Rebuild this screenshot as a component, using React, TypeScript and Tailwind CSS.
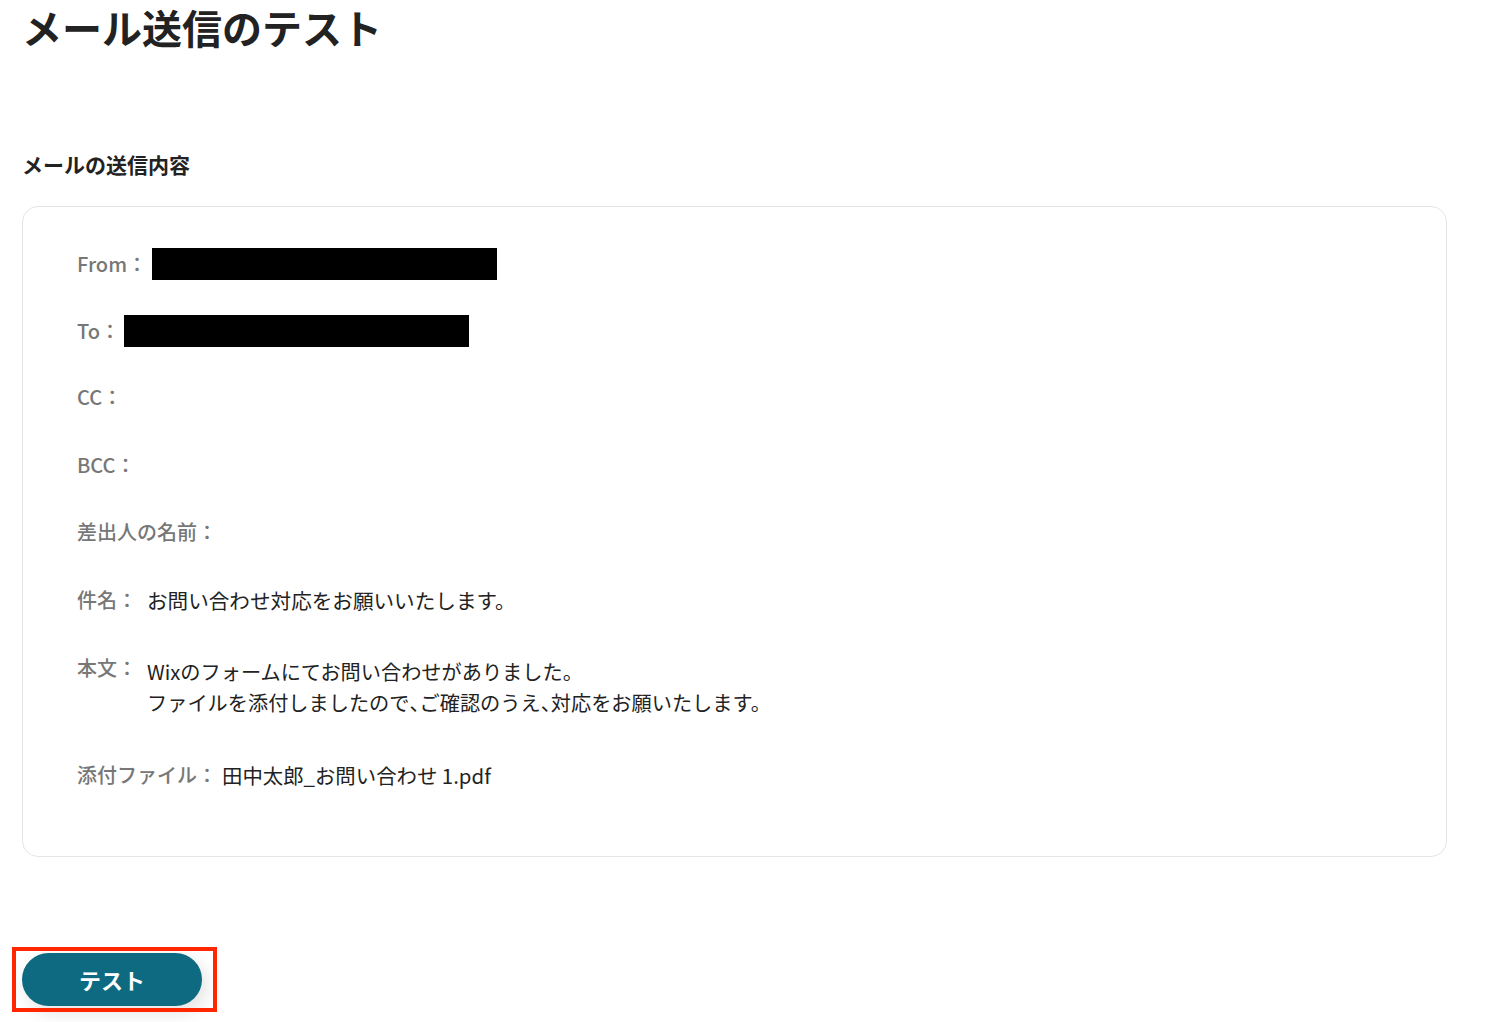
const font = { fontFamily: '"Noto Sans CJK JP", "Noto Sans", sans-serif' }

interface FieldProps {
  label: string
  children?: React.ReactNode
  className?: string
}

function Field({ label, children, className = '' }: FieldProps) {
  return (
    <div className={`flex items-start ${className}`}>
      <span className="shrink-0 text-[20px] leading-[32px] font-medium text-[#777777]">
        {label}
      </span>
      {children}
    </div>
  )
}

function Redacted({ className = '' }: { className?: string }) {
  return <div className={`h-[32px] w-[345px] bg-black ${className}`} />
}

// half-width comma like the reference's proportional punctuation
function Comma() {
  return <span className="[font-feature-settings:'halt']">、</span>
}

export default function App() {
  return (
    <div className="min-h-screen bg-white pl-[22px]" style={font}>
      <h1 className="pt-[3px] text-[40px] leading-[48px] font-bold text-[#222222]">
        メール送信のテスト
      </h1>

      <h2 className="mt-[98px] text-[21px] leading-[30px] font-bold text-[#222222]">
        メールの送信内容
      </h2>

      <section className="mt-[27px] flex h-[651px] w-[1425px] flex-col rounded-[16px] border border-[#e5e5e5] pt-[41px] pl-[54px]">
        <Field label="From：">
          <Redacted className="ml-[5px]" />
        </Field>
        <Field label="To：" className="mt-[35px]">
          <Redacted className="ml-[4px]" />
        </Field>
        <Field label="CC：" className="mt-[34px]" />
        <Field label="BCC：" className="mt-[36px]" />
        <Field label="差出人の名前：" className="mt-[35px]" />
        <Field label="件名：" className="mt-[36px]">
          <span className="ml-[10px] text-[20.6px] leading-[32px] text-[#222222]">
            お問い合わせ対応をお願いいたします。
          </span>
        </Field>
        <Field label="本文：" className="mt-[36px]">
          <p className="mt-[4px] ml-[10px] text-[20.2px] leading-[31px] text-[#222222]">
            Wixのフォームにてお問い合わせがありました。
            <br />
            ファイルを添付しましたので
            <Comma />
            ご確認のうえ
            <Comma />
            対応をお願いたします。
          </p>
        </Field>
        <Field label="添付ファイル：" className="mt-[41px]">
          <span className="ml-[5px] text-[20.4px] leading-[32px] text-[#222222]">
            田中太郎_お問い合わせ 1.pdf
          </span>
        </Field>
      </section>

      <div className="relative mt-[96px] inline-block">
        <button className="h-[53px] w-[180px] rounded-full bg-[#0d6a80] text-[22px] font-bold text-white shadow-[4px_6px_18px_rgba(0,0,0,0.12)]">
          テスト
        </button>
        <div className="absolute -top-[6px] -left-[10px] h-[65px] w-[205px] border-4 border-[#ff2600]" />
      </div>
    </div>
  )
}
